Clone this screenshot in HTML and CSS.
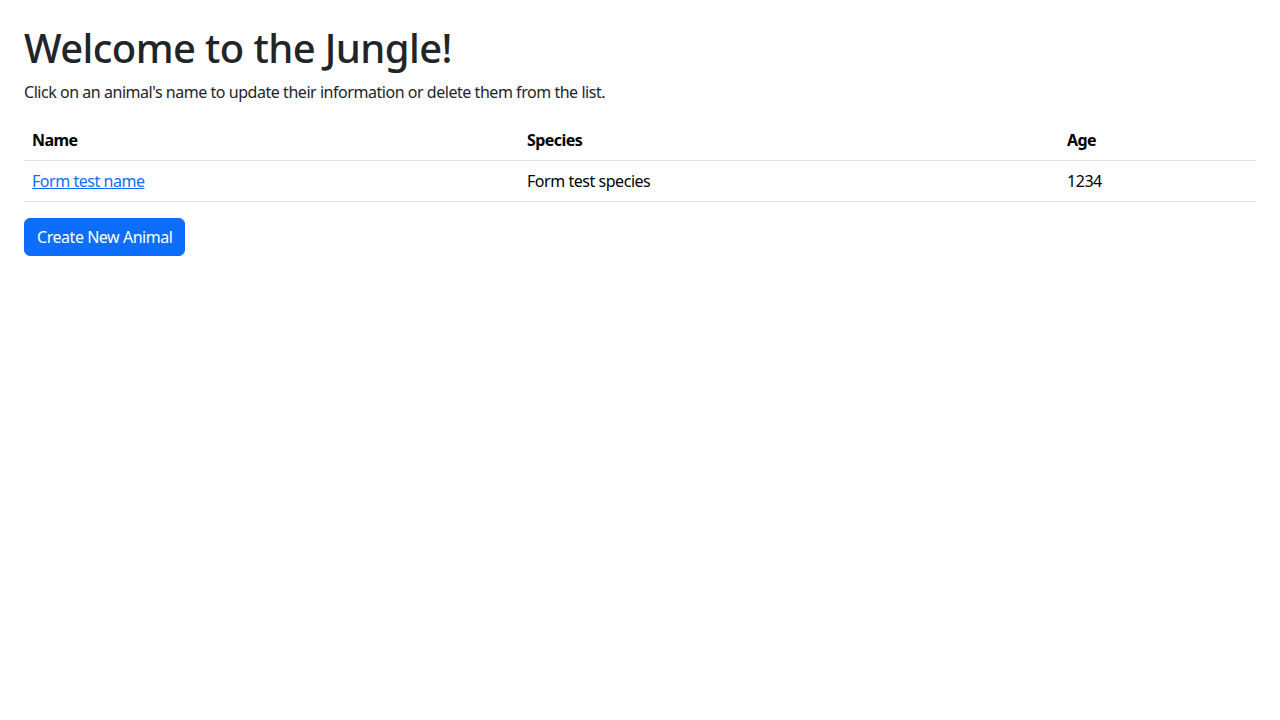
FILE: index.html
```html
<!DOCTYPE html>
<html lang="en">
<head>
<meta charset="utf-8">
<title>Welcome to the Jungle!</title>
<link rel="stylesheet" href="styles.css">
</head>
<body>
<main class="page">
  <h1 class="title">Welcome to the Jungle!</h1>
  <p class="intro">Click on an animal's name to update their information or delete them from the list.</p>
  <table class="animals">
    <colgroup>
      <col class="col-name">
      <col class="col-species">
      <col class="col-age">
    </colgroup>
    <thead>
      <tr><th>Name</th><th>Species</th><th>Age</th></tr>
    </thead>
    <tbody>
      <tr><td><a href="#" class="link">Form test name</a></td><td>Form test species</td><td>1234</td></tr>
    </tbody>
  </table>
  <a href="#" class="btn">Create New Animal</a>
</main>
</body>
</html>
```
FILE: styles.css
```css
* { box-sizing: border-box; }
html, body { margin: 0; padding: 0; background: #fff; }
body {
  font-family: "Noto Sans", "Open Sans", sans-serif;
  font-size: 16px;
  line-height: 1.5;
  color: #212529;
  letter-spacing: -0.46px;
}
.page { padding: 24px; }
.title {
  margin: 0 0 8px;
  font-size: 40px;
  font-weight: 500;
  line-height: 1.2;
  letter-spacing: -0.6px;
  padding-top: 1px;
  margin-top: -1px;
}
.intro { margin: 0 0 16px; }
.animals {
  width: 100%;
  border-collapse: collapse;
  margin-bottom: 16px;
  color: #000;
}
.col-name { width: 495px; }
.col-species { width: 540px; }
.col-age { width: 197px; }
.animals th, .animals td {
  padding: 8px;
  text-align: left;
  border-bottom: 1px solid #dee2e6;
  vertical-align: top;
}
.animals th { font-weight: 700; letter-spacing: -0.55px; }
.animals td { font-weight: 400; }
.link { color: #0d6efd; text-decoration: underline; }
.btn {
  display: inline-block;
  padding: 6px 12px;
  font-size: 16px;
  line-height: 1.5;
  color: #fff;
  background: #0d6efd;
  border: 1px solid #0d6efd;
  border-radius: 6px;
  text-decoration: none;
}
```
